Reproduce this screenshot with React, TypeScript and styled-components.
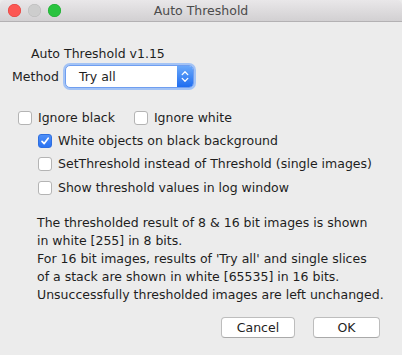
import React from "react";
import styled, { createGlobalStyle } from "styled-components";

const Global = createGlobalStyle`
  html, body { margin: 0; padding: 0; background: #ececec; }
  body { font-family: "DejaVu Sans", "Liberation Sans", sans-serif; }
  * { box-sizing: border-box; }
`;

const Window = styled.div`
  width: 402px;
  height: 355px;
  display: flex;
  flex-direction: column;
  background: #ececec;
  border-radius: 5px 5px 0 0;
  overflow: hidden;
  color: #1e1e1e;
  font-size: 12.5px;
`;

const TitleBar = styled.div`
  height: 22px;
  flex: none;
  display: flex;
  align-items: center;
  position: relative;
  background: linear-gradient(#e9e7e9, #d2d0d2);
  border-bottom: 1px solid #b3b1b3;
`;

const Lights = styled.div`
  display: flex;
  gap: 7px;
  padding-left: 8px;
`;

const Light = styled.span<{ $c: string; $b: string }>`
  width: 13px;
  height: 13px;
  border-radius: 50%;
  background: ${(p) => p.$c};
  box-shadow: inset 0 0 0 0.5px ${(p) => p.$b};
`;

const Title = styled.div`
  position: absolute;
  left: 0;
  right: 0;
  text-align: center;
  color: #4b4b4b;
  font-size: 12.5px;
  pointer-events: none;
`;

const Body = styled.div`
  flex: 1;
  display: flex;
  flex-direction: column;
`;

const Heading = styled.div`
  margin-top: 24px;
  padding-left: 31px;
  line-height: 16px;
`;

const MethodRow = styled.div`
  margin-top: 3px;
  display: flex;
  align-items: center;
  padding-left: 12px;
  gap: 6px;
  height: 23px;
`;

const Select = styled.div`
  width: 129px;
  height: 23px;
  background: #fff;
  border-radius: 5px;
  border: 1px solid #6f9ef0;
  box-shadow: 0 0 0 2px #a3c3f5;
  display: flex;
  align-items: center;
  overflow: hidden;
`;

const SelectText = styled.span`
  flex: 1;
  padding-left: 13px;
`;

const Stepper = styled.span`
  width: 16px;
  height: 100%;
  background: linear-gradient(#6aa8fa, #1f6df0);
  display: flex;
  align-items: center;
  justify-content: center;
`;

const Checks = styled.div`
  margin-top: 23px;
  display: flex;
  flex-direction: column;
  gap: 9.2px;
`;

const CheckLine = styled.div<{ $indent: number }>`
  display: flex;
  align-items: center;
  padding-left: ${(p) => p.$indent}px;
  gap: 19px;
  height: 14px;
`;

const CheckItem = styled.label`
  display: flex;
  align-items: center;
  gap: 6px;
  line-height: 14px;
`;

const Box = styled.span<{ $on?: boolean }>`
  width: 14px;
  height: 14px;
  border-radius: 3px;
  flex: none;
  display: flex;
  align-items: center;
  justify-content: center;
  background: ${(p) => (p.$on ? "linear-gradient(#4f8ff7, #2a72f2)" : "#fff")};
  border: 1px solid ${(p) => (p.$on ? "#2e6fe0" : "#b4b4b4")};
`;

const Info = styled.div`
  margin-top: 19px;
  padding-left: 37px;
  line-height: 18px;
`;

const Buttons = styled.div`
  margin-top: auto;
  margin-bottom: 17px;
  display: flex;
  justify-content: flex-end;
  gap: 18px;
  padding-right: 22px;
`;

const Button = styled.button<{ $w: number }>`
  width: ${(p) => p.$w}px;
  height: 21px;
  background: #fff;
  border: 1px solid #bdbdbd;
  border-bottom-color: #a9a9a9;
  border-radius: 4px;
  font: inherit;
  color: #1e1e1e;
  padding: 0;
`;

const Check = ({ on, label }: { on?: boolean; label: string }) => (
  <CheckItem>
    <Box $on={on}>
      {on && (
        <svg width="10" height="10" viewBox="0 0 10 10">
          <path d="M2 5.3 L4.2 7.6 L8.2 2.2" fill="none" stroke="#fff" strokeWidth="1.7" strokeLinecap="round" strokeLinejoin="round" />
        </svg>
      )}
    </Box>
    {label}
  </CheckItem>
);

export default function App() {
  return (
    <Window>
      <Global />
      <TitleBar>
        <Lights>
          <Light $c="#fc5753" $b="#df3d38" />
          <Light $c="#cdcdcd" $b="#b8b8b8" />
          <Light $c="#29c33f" $b="#1ba72d" />
        </Lights>
        <Title>Auto Threshold</Title>
      </TitleBar>
      <Body>
        <Heading>Auto Threshold v1.15</Heading>
        <MethodRow>
          <span>Method</span>
          <Select>
            <SelectText>Try all</SelectText>
            <Stepper>
              <svg width="8" height="13" viewBox="0 0 8 13">
                <path d="M1.2 4.6 L4 1.8 L6.8 4.6 M1.2 8.4 L4 11.2 L6.8 8.4" fill="none" stroke="#fff" strokeWidth="1.3" strokeLinecap="round" strokeLinejoin="round" />
              </svg>
            </Stepper>
          </Select>
        </MethodRow>
        <Checks>
          <CheckLine $indent={18}>
            <Check label="Ignore black" />
            <Check label="Ignore white" />
          </CheckLine>
          <CheckLine $indent={38}>
            <Check on label="White objects on black background" />
          </CheckLine>
          <CheckLine $indent={38}>
            <Check label="SetThreshold instead of Threshold (single images)" />
          </CheckLine>
          <CheckLine $indent={38}>
            <Check label="Show threshold values in log window" />
          </CheckLine>
        </Checks>
        <Info>
          The thresholded result of 8 &amp; 16 bit images is shown
          <br />
          in white [255] in 8 bits.
          <br />
          For 16 bit images, results of 'Try all' and single slices
          <br />
          of a stack are shown in white [65535] in 16 bits.
          <br />
          Unsuccessfully thresholded images are left unchanged.
        </Info>
        <Buttons>
          <Button $w={74}>Cancel</Button>
          <Button $w={67}>OK</Button>
        </Buttons>
      </Body>
    </Window>
  );
}
